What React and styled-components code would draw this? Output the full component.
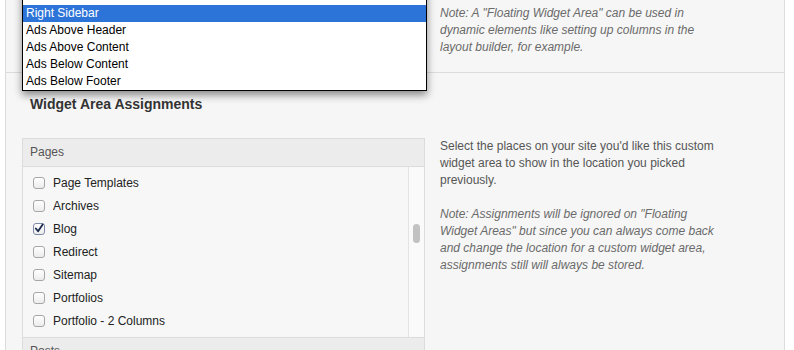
import React from "react";
import styled, { createGlobalStyle } from "styled-components";

const GlobalStyle = createGlobalStyle`
  html, body {
    margin: 0;
    padding: 0;
    background: #fff;
    font-family: "Liberation Sans", Arial, Helvetica, sans-serif;
    font-size: 12px;
  }
`;

const Page = styled.div`
  margin-left: 5px;
  width: 778px;
  height: 350px;
  overflow: hidden;
  background: #f6f6f6;
  border-left: 1px solid #dcdcdc;
  border-right: 1px solid #dcdcdc;
`;

const Section = styled.div`
  display: grid;
  grid-template-columns: 434px 1fr;
  box-sizing: border-box;
  height: ${(props) => props.height || "auto"};
  border-bottom: ${(props) => (props.divider ? "1px solid #dcdcdc" : "none")};
`;

const LeftCol = styled.div`
  position: relative;
  padding-left: 16px;
`;

const RightCol = styled.div`
  padding-top: ${(props) => props.top || 0}px;
`;

const Description = styled.p`
  margin: 0 0 17px;
  width: 280px;
  line-height: 17px;
  color: ${(props) => (props.note ? "#6a6a6a" : "#555")};
  font-style: ${(props) => (props.note ? "italic" : "normal")};
`;

const Dropdown = styled.ul`
  position: absolute;
  top: -13px;
  left: 16px;
  width: 405px;
  box-sizing: border-box;
  margin: 0;
  padding: 0;
  list-style: none;
  background: #fff;
  border: 1px solid #000;
  box-shadow: 0 4px 8px rgba(0, 0, 0, 0.45);
  z-index: 2;
`;

const Option = styled.li`
  height: 17px;
  line-height: 17px;
  padding-left: 3px;
  color: ${(props) => (props.active ? "#fff" : "#000")};
  background: ${(props) => (props.active ? "#2d74d8" : "transparent")};
`;

const Heading = styled.h3`
  margin: 0;
  padding: 23px 0 0 24px;
  height: 65px;
  box-sizing: border-box;
  font-size: 14px;
  line-height: 16px;
  font-weight: bold;
  color: #333;
`;

const Box = styled.div`
  width: 403px;
  box-sizing: border-box;
  border: 1px solid #dcdcdc;
  border-bottom: none;
`;

const BoxHeader = styled.div`
  height: 27px;
  line-height: 27px;
  padding-left: 7px;
  background: #ececec;
  border-bottom: 1px solid #dcdcdc;
  color: #555;
`;

const ListArea = styled.div`
  display: flex;
  height: 170px;
  background: #f7f7f7;
  border-bottom: 1px solid #dcdcdc;
`;

const List = styled.ul`
  flex: 1;
  margin: 0;
  padding: 0;
  list-style: none;
  overflow: hidden;
`;

const Items = styled.div`
  margin-top: -19px;
`;

const Item = styled.li`
  display: flex;
  align-items: center;
  height: 23px;
  padding-left: 10px;
  color: #222;
`;

const Check = styled.span`
  display: flex;
  align-items: center;
  justify-content: center;
  width: 12px;
  height: 12px;
  box-sizing: border-box;
  margin-right: 8px;
  border: 1px solid ${(props) => (props.checked ? "#7d8aa8" : "#a6a6a6")};
  border-radius: 3px;
  background: linear-gradient(#fff, #ececec);
`;

const Track = styled.div`
  width: 15px;
  padding-top: 57px;
  display: flex;
  justify-content: center;
  background: #fafafa;
  border-left: 1px solid #e3e3e3;
`;

const Thumb = styled.div`
  width: 7px;
  height: 19px;
  border-radius: 4px;
  background: #c2c2c2;
`;

const options = [
  { label: "Left Sidebar" },
  { label: "Right Sidebar", active: true },
  { label: "Ads Above Header" },
  { label: "Ads Above Content" },
  { label: "Ads Below Content" },
  { label: "Ads Below Footer" },
];

const pages = [
  { label: "" },
  { label: "Page Templates" },
  { label: "Archives" },
  { label: "Blog", checked: true },
  { label: "Redirect" },
  { label: "Sitemap" },
  { label: "Portfolios" },
  { label: "Portfolio - 2 Columns" },
];

const App = () => {
  return (
    <>
      <GlobalStyle />
      <Page>
        <Section height="73px" divider>
          <LeftCol>
            <Dropdown>
              {options.map((o) => (
                <Option key={o.label} active={o.active}>
                  {o.label}
                </Option>
              ))}
            </Dropdown>
          </LeftCol>
          <RightCol top={5}>
            <Description note>
              Note: A "Floating Widget Area" can be used in dynamic elements
              like setting up columns in the layout builder, for example.
            </Description>
          </RightCol>
        </Section>

        <Heading>Widget Area Assignments</Heading>
        <Section>
          <LeftCol>
            <Box>
              <BoxHeader>Pages</BoxHeader>
              <ListArea>
                <List>
                  <Items>
                    {pages.map((p, i) => (
                      <Item key={i}>
                        <Check checked={p.checked}>
                          {p.checked && (
                            <svg width="11" height="11" viewBox="0 0 11 11">
                              <path
                                d="M2 5.5 L4.5 8.5 L9.5 1"
                                fill="none"
                                stroke="#1c2a4a"
                                strokeWidth="2"
                                strokeLinecap="round"
                                strokeLinejoin="round"
                              />
                            </svg>
                          )}
                        </Check>
                        {p.label}
                      </Item>
                    ))}
                  </Items>
                </List>
                <Track>
                  <Thumb />
                </Track>
              </ListArea>
              <BoxHeader>Posts</BoxHeader>
            </Box>
          </LeftCol>
          <RightCol>
            <Description>
              Select the places on your site you'd like this custom widget area
              to show in the location you picked previously.
            </Description>
            <Description note>
              Note: Assignments will be ignored on "Floating Widget Areas" but
              since you can always come back and change the location for a
              custom widget area, assignments still will always be stored.
            </Description>
          </RightCol>
        </Section>
      </Page>
    </>
  );
};

export default App;
